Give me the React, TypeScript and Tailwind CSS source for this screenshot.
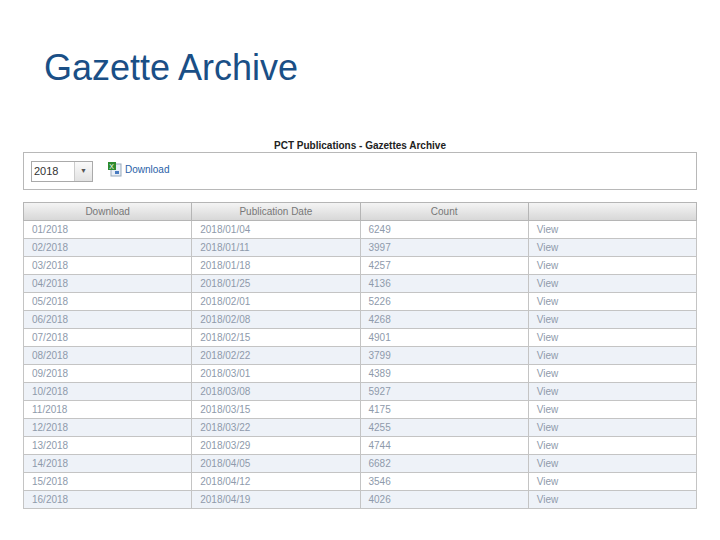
const rows: [string,string,string][] = [
["01/2018","2018/01/04","6249"],["02/2018","2018/01/11","3997"],["03/2018","2018/01/18","4257"],["04/2018","2018/01/25","4136"],
["05/2018","2018/02/01","5226"],["06/2018","2018/02/08","4268"],["07/2018","2018/02/15","4901"],["08/2018","2018/02/22","3799"],
["09/2018","2018/03/01","4389"],["10/2018","2018/03/08","5927"],["11/2018","2018/03/15","4175"],["12/2018","2018/03/22","4255"],
["13/2018","2018/03/29","4744"],["14/2018","2018/04/05","6682"],["15/2018","2018/04/12","3546"],["16/2018","2018/04/19","4026"]];
export default function App(){
  return <div className="w-[720px] h-[540px] bg-white overflow-hidden" style={{fontFamily:'"Liberation Sans", Arial, sans-serif'}}>
    <div className="pt-[46px] pl-[44px] text-[36px] leading-[44px] text-[#1a4f86]">Gazette Archive</div>
    <div className="mx-[23px] mt-[50px] w-[674px]">
      <div className="text-center text-[10px] font-bold text-[#222] leading-[12px]">PCT Publications - Gazettes Archive</div>
      <div className="border border-[#b8b8b8] h-[38px] flex items-center px-[7px] gap-[14px]">
        <div className="w-[62px] h-[21px] border border-[#aaa] flex bg-white">
          <div className="flex-1 text-[11px] leading-[19px] pl-[2px] text-[#333]">2018</div>
          <div className="w-[18px] border-l border-[#ccc] bg-gradient-to-b from-[#fafafa] to-[#e2e2e2] flex items-center justify-center text-[7px] text-[#555]">▼</div>
        </div>
        <div className="flex items-center gap-[2px] -mt-[4px]">
          <svg width="16" height="16" viewBox="0 0 16 16"><rect x="4" y="3" width="10" height="12" fill="#e8eef6" stroke="#9ab"/><rect x="1" y="1" width="8" height="8" fill="#2e8b2e"/><text x="2.2" y="7.5" fontSize="7" fill="#fff" fontFamily="Liberation Sans">X</text><rect x="8" y="10" width="4" height="3" fill="#4a7bc0"/></svg>
          <span className="text-[10px] text-[#2a5fa8]">Download</span>
        </div>
      </div>
      <table className="mt-[12px] w-full border-collapse text-[10px] table-fixed">
        <thead><tr className="h-[18px] bg-gradient-to-b from-[#f4f4f4] to-[#d6d6d6]">
          {["Download","Publication Date","Count",""].map((h,i)=><th key={i} className="border border-[#b5b5b5] font-normal text-[#777] p-0">{h}</th>)}
        </tr></thead>
        <tbody>{rows.map((r,i)=><tr key={i} className={`h-[18px] ${i%2?"bg-[#eef2f8]":"bg-white"}`}>
          {[...r,"View"].map((c,j)=><td key={j} className="border border-[#c4c4c4] p-0 pl-[8px] text-[#8e9aab] leading-[16px]">{c}</td>)}
        </tr>)}</tbody>
      </table>
    </div>
  </div>;
}
